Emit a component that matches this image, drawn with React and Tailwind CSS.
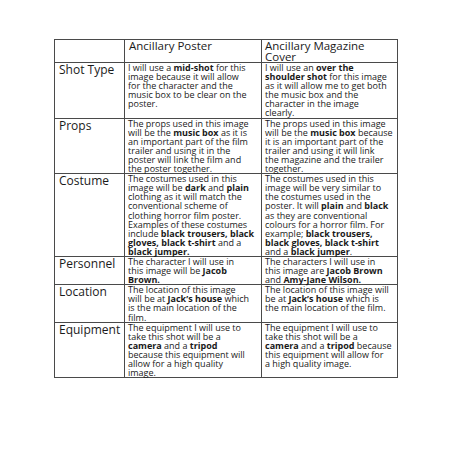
import React from "react";

const rows = [
  {
    label: "Shot Type",
    a: ["I will use a **mid-shot** for this", "image because it will allow", "for the character and the", "music box to be clear on the", "poster."],
    b: ["I will use an **over the**", "**shoulder shot** for this image", "as it will allow me to get both", "the music box and the", "character in the image", "clearly."],
  },
  {
    label: "Props",
    a: ["The props used in this image", "will be the **music box** as it is", "an important part of the film", "trailer and using it in the", "poster will link the film and", "the poster together."],
    b: ["The props used in this image", "will be the **music box** because", "it is an important part of the", "trailer and using it will link", "the magazine and the trailer", "together."],
  },
  {
    label: "Costume",
    a: ["The costumes used in this", "image will be **dark** and **plain**", "clothing as it will match the", "conventional scheme of", "clothing horror film poster.", "Examples of these costumes", "include **black trousers, black**", "**gloves, black t-shirt** and a", "**black jumper.**"],
    b: ["The costumes used in this", "image will be very similar to", "the costumes used in the", "poster. It will **plain** and **black**", "as they are conventional", "colours for a horror film. For", "example; **black trousers,**", "**black gloves, black t-shirt**", "and a **black jumper**."],
  },
  {
    label: "Personnel",
    a: ["The character I will use in", "this image will be **Jacob**", "**Brown.**"],
    b: ["The characters I will use in", "this image are **Jacob Brown**", "and **Amy-Jane Wilson.**"],
  },
  {
    label: "Location",
    a: ["The location of this image", "will be at **Jack’s house** which", "is the main location of the", "film."],
    b: ["The location of this image will", "be at **Jack’s house** which is", "the main location of the film."],
  },
  {
    label: "Equipment",
    a: ["The equipment I will use to", "take this shot will be a", "**camera** and a **tripod**", "because this equipment will", "allow for a high quality", "image."],
    b: ["The equipment I will use to", "take this shot will be a", "**camera** and a **tripod** because", "this equipment will allow for", "a high quality image."],
  },
];

function Line({ text }) {
  const parts = text.split("**");
  return (
    <div className="whitespace-nowrap h-[9.1px]">
      {parts.map((p, i) =>
        i % 2 === 1 ? (
          <b key={i} className="font-bold">{p}</b>
        ) : (
          <span key={i}>{p}</span>
        )
      )}
    </div>
  );
}

function Body({ lines }) {
  return (
    <div className="text-[9px] leading-[9.1px] text-[#1a1a1a]">
      {lines.map((l, i) => (
        <Line key={i} text={l} />
      ))}
    </div>
  );
}

export default function App() {
  return (
    <div
      className="w-[453px] h-[453px] bg-white pt-[39px] pl-[54px]"
      style={{ fontFamily: '"Open Sans", "Noto Sans", sans-serif' }}
    >
      <table className="border-collapse table-fixed w-[343px]">
        <colgroup>
          <col className="w-[70px]" />
          <col className="w-[137px]" />
          <col className="w-[136px]" />
        </colgroup>
        <tbody>
          <tr>
            <td className="border border-[#4a4a4a] align-top h-[23px]"></td>
            <td className="border border-[#4a4a4a] align-top pl-[4px] pt-0 text-[11.5px] leading-[11px] text-[#1a1a1a] whitespace-nowrap">
              Ancillary Poster
            </td>
            <td className="border border-[#4a4a4a] align-top pl-[3px] pt-0 text-[11.5px] leading-[11px] text-[#1a1a1a] whitespace-nowrap">
              <div>Ancillary Magazine</div>
              <div>Cover</div>
            </td>
          </tr>
          {rows.map((r) => (
            <tr key={r.label}>
              <td className="border border-[#4a4a4a] align-top pl-[4px] pt-0 text-[12px] leading-[13px] text-[#1a1a1a] whitespace-nowrap">
                {r.label}
              </td>
              <td className="border border-[#4a4a4a] align-top pl-[3px] pt-0">
                <Body lines={r.a} />
              </td>
              <td className="border border-[#4a4a4a] align-top pl-[3px] pt-0">
                <Body lines={r.b} />
              </td>
            </tr>
          ))}
        </tbody>
      </table>
    </div>
  );
}
